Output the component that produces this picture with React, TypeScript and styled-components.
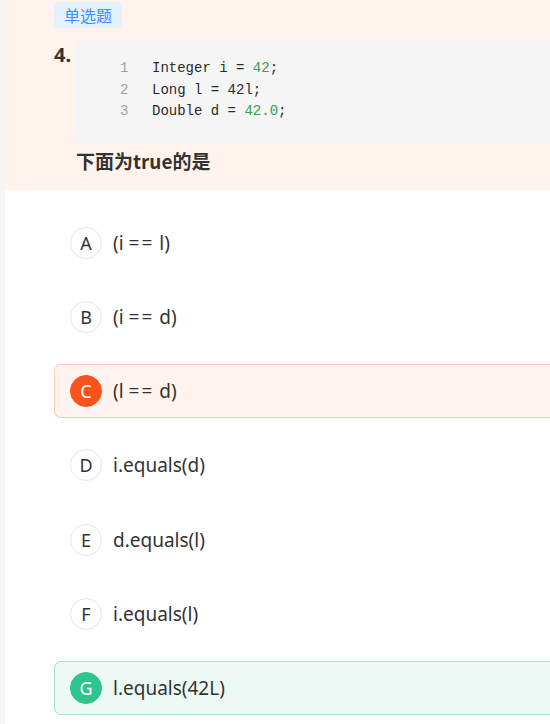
import React from 'react'
import styled, { createGlobalStyle } from 'styled-components'

type Tone = 'none' | 'wrong' | 'right'

type OptionItem = {
  key: string
  text: string
  tone: Tone
}

const OPTIONS: OptionItem[] = [
  { key: 'A', text: '(i == l)', tone: 'none' },
  { key: 'B', text: '(i == d)', tone: 'none' },
  { key: 'C', text: '(l == d)', tone: 'wrong' },
  { key: 'D', text: 'i.equals(d)', tone: 'none' },
  { key: 'E', text: 'd.equals(l)', tone: 'none' },
  { key: 'F', text: 'i.equals(l)', tone: 'none' },
  { key: 'G', text: 'l.equals(42L)', tone: 'right' },
]

const tones = {
  none: { bg: 'transparent', border: 'transparent', dot: '#ffffff', dotBorder: '#e6e6e6', letter: '#333333' },
  wrong: { bg: '#fff4f0', border: '#ffc8b4', dot: '#fa541c', dotBorder: '#fa541c', letter: '#ffffff' },
  right: { bg: '#edf9f5', border: '#a8e6cd', dot: '#2ec58d', dotBorder: '#2ec58d', letter: '#ffffff' },
}

const GlobalStyle = createGlobalStyle`
  html, body {
    margin: 0;
    padding: 0;
    background: #ffffff;
    overflow: hidden;
  }
  body {
    font-family: "Noto Sans", "Noto Sans CJK SC", sans-serif;
    color: #333333;
  }
`

const Page = styled.div`
  display: flex;
  width: 100%;
  min-height: 724px;
`

const SideStrip = styled.div`
  width: 5px;
  flex: none;
  background: #f5f5f5;
`

const Main = styled.div`
  flex: 1;
  min-width: 0;
  display: flex;
  flex-direction: column;
`

const QuestionHead = styled.div`
  background: #fff3ee;
  padding: 2px 0 16px 49px;
`

const Tag = styled.span`
  display: inline-block;
  height: 26px;
  line-height: 26px;
  padding: 0 10px;
  border-radius: 5px;
  background: #e3f2ff;
  color: #3f8cff;
  font-size: 16px;
  font-family: "Noto Sans CJK SC", sans-serif;
`

const StemRow = styled.div`
  display: flex;
  margin-top: 12px;
`

const Number = styled.div`
  width: 22px;
  flex: none;
  font-size: 20px;
  font-weight: 700;
  line-height: 24px;
  margin-top: 3px;
  color: #333333;
`

const Stem = styled.div`
  flex: 1;
  min-width: 0;
`

const CodeBlock = styled.div`
  background: #f5f5f5;
  padding: 18px 0 19px 44px;
  font-family: "Liberation Mono", "DejaVu Sans Mono", monospace;
  font-size: 14px;
  line-height: 21.5px;
`

const CodeLine = styled.div`
  display: flex;
  white-space: pre;
`

const LineNo = styled.span`
  width: 32px;
  color: #a0a0a0;
`

const CodeText = styled.span`
  color: #2b2b2b;
`

const Num = styled.span`
  color: #2ea44f;
`

const Prompt = styled.div`
  margin-top: 6px;
  font-size: 19px;
  font-weight: 700;
  line-height: 26px;
  font-family: "Noto Sans CJK SC", sans-serif;
  color: #333333;
`

const OptionList = styled.div`
  display: flex;
  flex-direction: column;
  gap: 20.3px;
  padding: 26px 0 0 49px;
`

const OptionRow = styled.div<{ $tone: Tone }>`
  display: flex;
  align-items: center;
  gap: 11px;
  height: 54px;
  box-sizing: border-box;
  padding-left: 15px;
  border-radius: 7px 0 0 7px;
  border: 1px solid ${({ $tone }) => tones[$tone].border};
  border-right-width: 0;
  background: ${({ $tone }) => tones[$tone].bg};
`

const Letter = styled.span<{ $tone: Tone }>`
  width: 32px;
  height: 32px;
  box-sizing: border-box;
  border-radius: 50%;
  display: flex;
  align-items: center;
  justify-content: center;
  font-size: 18px;
  border: 1px solid ${({ $tone }) => tones[$tone].dotBorder};
  background: ${({ $tone }) => tones[$tone].dot};
  color: ${({ $tone }) => tones[$tone].letter};
`

const OptionText = styled.span`
  font-size: 19px;
  color: #333333;
  white-space: pre;
`

// the "==" operator renders with a little air between its bars
const Eq = styled.span`
  letter-spacing: 2px;
`

const renderText = (text: string) => {
  const parts = text.split('==')
  return parts.map((p, i) => (
    <React.Fragment key={i}>
      {p}
      {i < parts.length - 1 && <Eq>==</Eq>}
    </React.Fragment>
  ))
}

const App: React.FC = () => (
  <>
    <GlobalStyle />
    <Page>
      <SideStrip />
      <Main>
        <QuestionHead>
          <Tag>单选题</Tag>
          <StemRow>
            <Number>4.</Number>
            <Stem>
              <CodeBlock>
                <CodeLine>
                  <LineNo>1</LineNo>
                  <CodeText>Integer i = <Num>42</Num>;</CodeText>
                </CodeLine>
                <CodeLine>
                  <LineNo>2</LineNo>
                  <CodeText>Long l = 42l;</CodeText>
                </CodeLine>
                <CodeLine>
                  <LineNo>3</LineNo>
                  <CodeText>Double d = <Num>42.0</Num>;</CodeText>
                </CodeLine>
              </CodeBlock>
              <Prompt>下面为true的是</Prompt>
            </Stem>
          </StemRow>
        </QuestionHead>
        <OptionList>
          {OPTIONS.map((o) => (
            <OptionRow key={o.key} $tone={o.tone}>
              <Letter $tone={o.tone}>{o.key}</Letter>
              <OptionText>{renderText(o.text)}</OptionText>
            </OptionRow>
          ))}
        </OptionList>
      </Main>
    </Page>
  </>
)

export default App
